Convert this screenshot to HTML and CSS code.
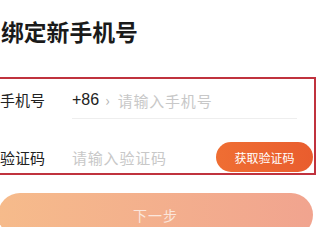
FILE: index.html
```html
<!DOCTYPE html>
<html lang="zh">
<head>
<meta charset="utf-8">
<link rel="stylesheet" href="styles.css">
</head>
<body>
<div class="page">
  <h1 class="title">绑定新手机号</h1>
  <div class="form">
    <div class="row row-phone">
      <span class="label">手机号</span>
      <div class="field field-line">
        <span class="code">+86</span>
        <span class="chev">›</span>
        <span class="ph">请输入手机号</span>
      </div>
    </div>
    <div class="row row-code">
      <span class="label">验证码</span>
      <div class="field">
        <span class="ph">请输入验证码</span>
      </div>
      <span class="send">获取验证码</span>
    </div>
  </div>
  <div class="next">下一步</div>
</div>
</body>
</html>
```

FILE: styles.css
```css
html, body {
  margin: 0;
  padding: 0;
  background: #ffffff;
  overflow: hidden;
}
body {
  font-family: "Noto Sans CJK SC", "Noto Sans", sans-serif;
  color: #222222;
}
.page {
  padding-top: 20px;
}
.title {
  margin: 0 0 0 1px;
  font-size: 22.8px;
  line-height: 24px;
  font-weight: 700;
  color: #1a1a1a;
}
.form {
  margin: 33px 2px 0 -10px;
  border: 2px solid #c0323e;
  padding-left: 8px;
}
.row {
  display: flex;
  align-items: center;
}
.row-phone {
  height: 40px;
}
.row-code {
  padding-top: 23px;
  height: 31px;
  align-items: flex-start;
}
.row-code .label,
.row-code .field {
  height: 30px;
  display: flex;
  align-items: center;
}
.label {
  width: 72px;
  flex: none;
  font-size: 15px;
  color: #222222;
}
.field {
  flex: 1;
  display: flex;
  align-items: center;
  font-size: 14.5px;
}
.field-line {
  height: 40px;
  border-bottom: 1px solid #eeeeee;
  margin-right: 17px;
  box-sizing: border-box;
  padding-top: 3px;
}
.code {
  font-family: "Liberation Sans", "Noto Sans", sans-serif;
  font-size: 16px;
  color: #222222;
}
.chev {
  color: #b5b5b5;
  font-size: 15px;
  margin: 0 8px 0 6px;
  position: relative;
  top: -1px;
}
.ph {
  color: #c8c8c8;
  font-size: 15px;
  letter-spacing: 0.8px;
}
.send {
  flex: none;
  width: 97px;
  height: 30px;
  margin-right: 1px;
  border-radius: 15px;
  background: linear-gradient(90deg, #ef6e33, #e95d2e);
  color: #fff;
  font-size: 12px;
  display: flex;
  align-items: center;
  justify-content: center;
}
.next {
  margin: 18px 0 0 -2px;
  width: 315px;
  height: 44px;
  border-radius: 22px;
  background: linear-gradient(90deg, #f6bb8b, #f1a48f);
  color: #fbe6dc;
  font-size: 14px;
  display: flex;
  align-items: center;
  justify-content: center;
  letter-spacing: 1px;
}
```
